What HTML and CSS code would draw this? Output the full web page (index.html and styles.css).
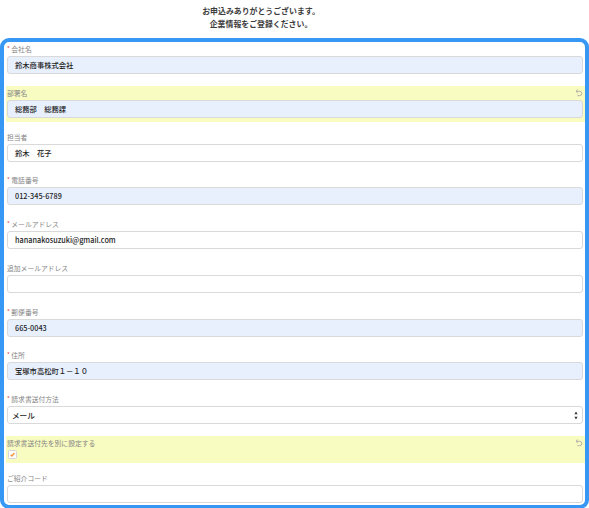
FILE: index.html
```html
<!DOCTYPE html>
<html lang="ja">
<head>
    <meta charset="UTF-8">
    <meta name="viewport" content="width=device-width, initial-scale=1.0">
    <title>企業情報の登録</title>
    <link rel="stylesheet" href="styles.css">
</head>
<body>
<header class="intro">
    <p>お申込みありがとうございます。</p>
    <p>企業情報をご登録ください。</p>
</header>
<form class="panel" id="company-form">
    <div class="field">
        <label class="field-label required">会社名</label>
        <input class="field-input filled" type="text" value="鈴木商事株式会社">
    </div>
    <div class="field changed">
        <label class="field-label">部署名</label>
        <input class="field-input filled" type="text" value="総務部　総務課">
        <svg class="undo" viewBox="0 0 8 8"><path d="M1 2.3 H4.6 A2.2 2.2 0 0 1 4.6 6.7 H2.4"/><path d="M2.8 0.6 L1 2.3 L2.8 4"/></svg>
    </div>
    <div class="field">
        <label class="field-label">担当者</label>
        <input class="field-input" type="text" value="鈴木　花子">
    </div>
    <div class="field">
        <label class="field-label required">電話番号</label>
        <input class="field-input filled" type="text" value="012-345-6789">
    </div>
    <div class="field">
        <label class="field-label required">メールアドレス</label>
        <input class="field-input" type="text" value="hananakosuzuki@gmail.com">
    </div>
    <div class="field">
        <label class="field-label">追加メールアドレス</label>
        <input class="field-input" type="text" value="">
    </div>
    <div class="field">
        <label class="field-label required">郵便番号</label>
        <input class="field-input filled" type="text" value="665-0043">
    </div>
    <div class="field">
        <label class="field-label required">住所</label>
        <input class="field-input filled" type="text" value="宝塚市高松町１－１０">
    </div>
    <div class="field">
        <label class="field-label required">請求書送付方法</label>
        <div class="select-wrap">
            <select class="field-input field-select">
                <option>メール</option>
                <option>郵送</option>
            </select>
            <svg class="select-arrows" viewBox="0 0 4 9"><path d="M2 0.5 L3.6 3.2 H0.4 Z"/><path d="M2 8.5 L3.6 5.8 H0.4 Z"/></svg>
        </div>
    </div>
    <div class="field changed">
        <label class="field-label">請求書送付先を別に設定する</label>
        <span class="check-box">
            <svg viewBox="0 0 7 7"><path d="M1.6 3.8 L2.9 5 L5.4 2"/></svg>
        </span>
        <svg class="undo" viewBox="0 0 8 8"><path d="M1 2.3 H4.6 A2.2 2.2 0 0 1 4.6 6.7 H2.4"/><path d="M2.8 0.6 L1 2.3 L2.8 4"/></svg>
    </div>
    <div class="field last">
        <label class="field-label">ご紹介コード</label>
        <input class="field-input" type="text" value="">
    </div>
</form>
</body>
</html>
```

FILE: styles.css
```css
body {
    margin: 0;
    font-family: "Noto Sans CJK JP", "Noto Sans", sans-serif;
    background-color: #fff;
    color: #333;
}

.intro {
    padding: 4px 67px 8px 0;
    text-align: center;
    font-size: 7.9px;
    font-weight: bold;
    line-height: 13px;
    color: #3c3c3c;
}

.intro p {
    margin: 0;
}

.panel {
    border: 4px solid #3797f5;
    border-radius: 9px;
    padding: 0 0 0 2px;
    margin: 0;
}

.field {
    position: relative;
    padding: 3px 2px 4px 1px;
    margin-bottom: 7.75px;
}

.field.last {
    margin-bottom: 0;
    padding-bottom: 2px;
}

.field.changed {
    background-color: #f9fcc0;
}

.field-label {
    display: block;
    font-size: 6.8px;
    line-height: 9px;
    height: 9px;
    margin-bottom: 2px;
    color: #858585;
}

.field-label.required::before {
    content: "*";
    color: #e2463c;
    font-size: 6px;
    vertical-align: top;
    line-height: 7px;
    margin-right: 1.5px;
}

.field-input {
    display: block;
    box-sizing: border-box;
    width: 100%;
    height: 18px;
    margin: 0;
    padding: 0 7px;
    border: 1px solid #d9d9d9;
    border-radius: 3px;
    background-color: #fff;
    font-family: "Noto Sans CJK JP", "Noto Sans", sans-serif;
    font-size: 7.3px;
    font-weight: 500;
    color: #1e1e1e;
    outline: none;
}

.field-input.filled {
    background-color: #e8f0fe;
}

.select-wrap {
    position: relative;
}

.field-select {
    appearance: none;
    -webkit-appearance: none;
    padding-left: 4px;
    font-size: 7.6px;
    font-weight: 500;
}

.select-arrows {
    position: absolute;
    right: 5px;
    top: 4.5px;
    width: 4px;
    height: 9px;
    fill: #333;
}

.check-box {
    display: block;
    box-sizing: border-box;
    width: 9px;
    height: 9px;
    margin-left: 1px;
    border: 1px solid #d6d6d6;
    border-radius: 1.5px;
    background-color: #fff;
}

.check-box svg {
    display: block;
    width: 7px;
    height: 7px;
    fill: none;
    stroke: #f0953a;
    stroke-width: 1.3;
}

.undo {
    position: absolute;
    top: 3px;
    right: 2px;
    width: 8px;
    height: 8px;
    fill: none;
    stroke: #a9a9a9;
    stroke-width: 0.9;
}
```
